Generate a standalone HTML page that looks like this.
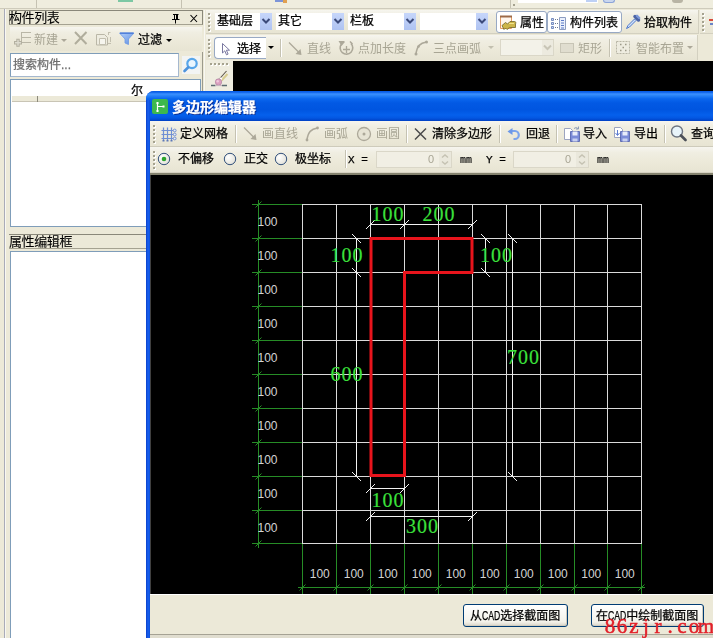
<!DOCTYPE html>
<html lang="zh-CN">
<head>
<meta charset="utf-8">
<title>多边形编辑器</title>
<style>
*{box-sizing:border-box;margin:0;padding:0}
html,body{width:713px;height:638px;overflow:hidden;background:#ECE9D8}
body{position:relative;font-family:"Liberation Sans","Noto Sans CJK SC",sans-serif;font-size:12px;color:#000;line-height:14px}
.a{position:absolute}
.t{position:absolute;white-space:nowrap;height:14px;line-height:14px;will-change:transform;-webkit-text-stroke:.25px}
.dis{color:#A8A594;-webkit-text-stroke:0}
.mono{font-family:"Liberation Mono","Noto Sans CJK SC",monospace;font-size:10px}
.nar{display:inline-block;transform:scaleX(.72);transform-origin:0 50%;margin-right:-7px}
.combo{position:absolute;height:17px;background:#fff;top:13px}
.combo .dd{position:absolute;right:0;top:0;width:12px;height:17px;background:linear-gradient(#C6D6FA,#AFC3F2)}
.sep{position:absolute;width:1px;background:#C5C2B2;box-shadow:1px 0 0 #fff}
.btn{position:absolute;background:#fff;border:1px solid #98A9C4;border-radius:3px}
.tbbg{background:linear-gradient(#F6F5EF 0,#F0EEE2 22%,#ECE9D9 60%,#E7E4D3 100%)}
.xpbtn{position:absolute;border:1px solid #003C74;border-radius:3px;background:linear-gradient(#fff,#F3F2EA 80%,#D9D4C8);box-shadow:inset -1px -1px 0 #D0CCBE}
</style>
</head>
<body>

<div class="a" id="topstrip" style="left:0;top:0;width:713px;height:9px;background:#EFEDDE;border-bottom:1px solid #CECBBB"></div>
<div class="a" style="left:36px;top:0;width:1px;height:8px;background:#C5C2B2"></div>
<div class="a" style="left:118px;top:0;width:15px;height:2px;background:#7CC8A4"></div>
<div class="a" style="left:181px;top:0;width:1px;height:8px;background:#C5C2B2"></div>
<div class="a" style="left:275px;top:0;width:8px;height:2px;background:#7C94D8"></div><div class="a" style="left:283px;top:0;width:4px;height:3px;background:#E0A050"></div>
<div class="a" style="left:510px;top:0;width:1px;height:8px;background:#C5C2B2"></div>
<div class="a" style="left:513px;top:4px;width:2px;height:2px;background:#A5A28F"></div>
<div class="a" style="left:518px;top:0;width:80px;height:3px;background:#fff"></div>
<div class="a" style="left:586px;top:0;width:11px;height:2px;background:#BDD0F5"></div>
<div class="a" style="left:603px;top:0;width:12px;height:3px;background:#C9D6EE;border:1px solid #8CA4D8;border-top:0;border-radius:0 0 3px 3px"></div>
<div class="a" style="left:672px;top:0;width:11px;height:3px;background:#B8B4A4;border-radius:0 0 3px 3px"></div>
<div class="a" id="leftpanel" style="left:0;top:9px;width:205px;height:629px;background:#ECE9D8"></div>
<div class="a" style="left:4px;top:9px;width:1px;height:629px;background:#A9ABB8"></div>
<div class="a" style="left:5px;top:9px;width:1px;height:629px;background:#F8F7F2"></div>
<div class="a" style="left:9px;top:10px;width:194px;height:15px;border:1px solid #8A887A;border-bottom-color:#A5A291;background:#ECE9D8"></div>
<div class="t" style="left:9px;top:11px;font-size:13px;letter-spacing:-0.4px;-webkit-text-stroke:.1px">构件列表</div>
<svg class="a" style="left:168px;top:11px" width="32" height="13" viewBox="0 0 32 13" ><path d="M5 3.5h5.5M6.5 3.5v5M9.5 3.5v5M8.5 3.5v5M4 8.5h7.5M7.5 9v3.5" stroke="#000" fill="none"/><path d="M22.5 4l6.5 7M29 4l-6.5 7" stroke="#000" fill="none" stroke-width="1.1"/></svg>
<div class="a tbbg" style="left:10px;top:27px;width:192px;height:24px"></div>
<svg class="a" style="left:13px;top:30px" width="19" height="18" viewBox="0 0 19 18" ><path d="M9 2.5h9M9 7.5h9M9 12.5h9M8.5 2v12" stroke="#B9B6A6" fill="none"/><path d="M5 8.7v8M1 12.7h8" stroke="#B3B0A0" stroke-width="3.4" fill="none"/><path d="M5 9.7v6M2 12.7h6" stroke="#DEDCD0" stroke-width="1.4" fill="none"/></svg>
<div class="t dis" style="left:34px;top:33px">新建</div>
<div class="a" style="left:61px;top:39px;width:0;height:0;border-left:3px solid transparent;border-right:3px solid transparent;border-top:3px solid #ACA899"></div>
<svg class="a" style="left:73px;top:30px" width="16" height="16" viewBox="0 0 16 16" ><path d="M2 2L13.5 14M13.5 2L2 14" stroke="#B0AD9C" stroke-width="2" fill="none"/></svg>
<svg class="a" style="left:95px;top:31px" width="18" height="15" viewBox="0 0 18 15" ><path d="M1.5 3.5h8l3 3v7.5h-11z" fill="#EEECE0" stroke="#BAB7A7"/><path d="M4.5 7.5h6v6h-6z" fill="#F6F5EE" stroke="#C2BFAF"/><path d="M13.5 1v3M15.5 1.5h-2M15.5 6v5M13 12.5h3" stroke="#C2BFAF" fill="none"/></svg>
<svg class="a" style="left:119px;top:32px" width="16" height="14" viewBox="0 0 16 14" ><defs><linearGradient id="fg" x1="0" y1="0" x2="1" y2="1"><stop offset="0" stop-color="#B4D0FA"/><stop offset="1" stop-color="#5C8CE0"/></linearGradient></defs><path d="M0.5 1h14.5L9.5 7v5.5L6 11V7z" fill="url(#fg)" stroke="#6C98E4" stroke-width=".8"/><path d="M1 1.2h13.5" stroke="#4C7CD8" stroke-width="1.4"/></svg>
<div class="t" style="left:138px;top:33px">过滤</div>
<div class="a" style="left:166px;top:39px;width:0;height:0;border-left:3px solid transparent;border-right:3px solid transparent;border-top:3px solid #000"></div>
<div class="a" style="left:10px;top:53px;width:169px;height:24px;background:#fff;border:1px solid #7F9DB9;border-bottom-color:#A5B8CF;border-right-color:#A5B8CF"></div>
<div class="t" style="left:13px;top:58px;color:#6D6D6D">搜索构件...</div>
<div class="a" style="left:182px;top:56px;width:18px;height:18px;background:#F2F4F4"></div>
<svg class="a" style="left:182px;top:57px" width="17" height="16" viewBox="0 0 17 16" ><circle cx="10" cy="6.5" r="4.7" fill="#EAF6FF" stroke="#58A6EA" stroke-width="2.2"/><path d="M6.3 10.3L2.5 14" stroke="#4D93DC" stroke-width="2.6" stroke-linecap="round"/></svg>
<div class="a" style="left:10px;top:79px;width:191px;height:148px;background:#fff;border:1px solid #7F9DB9"></div>
<div class="a" style="left:12px;top:96px;width:188px;height:6px;background:#ECE9D8;border-bottom:1px solid #C9C5B5"></div>
<div class="a" style="left:37px;top:96px;width:1px;height:6px;background:#8C8A7C"></div>
<div class="t" style="left:131px;top:84px">尔</div>
<div class="a" style="left:9px;top:234px;width:194px;height:15px;border-top:1px solid #8A887A;border-bottom:1px solid #A5A291"></div>
<div class="t" style="left:9px;top:235px;font-size:13px;letter-spacing:-0.4px;-webkit-text-stroke:.1px">属性编辑框</div>
<div class="a" style="left:10px;top:251px;width:191px;height:400px;background:#fff;border:1px solid #7F9DB9"></div>
<div class="a tbbg" id="tb1" style="left:206px;top:10px;width:492px;height:24px;border-bottom:1px solid #D3D0C0"></div>
<div class="a" style="left:208px;top:13px;width:2px;height:2px;background:#A5A28F;box-shadow:1px 1px 0 #fff"></div><div class="a" style="left:208px;top:17px;width:2px;height:2px;background:#A5A28F;box-shadow:1px 1px 0 #fff"></div><div class="a" style="left:208px;top:21px;width:2px;height:2px;background:#A5A28F;box-shadow:1px 1px 0 #fff"></div><div class="a" style="left:208px;top:25px;width:2px;height:2px;background:#A5A28F;box-shadow:1px 1px 0 #fff"></div><div class="a" style="left:208px;top:29px;width:2px;height:2px;background:#A5A28F;box-shadow:1px 1px 0 #fff"></div>
<div class="combo" style="left:215px;width:57px"><span class="t" style="left:2px;top:1px">基础层</span><span class="dd"></span><svg class="a" style="right:0;top:0" width="12" height="17" viewBox="0 0 12 17"><path d="M2.5 6l3.5 3.5l3.5 -3.5" stroke="#3B4A7A" stroke-width="2" fill="none"/></svg></div>
<div class="combo" style="left:276px;width:68px"><span class="t" style="left:2px;top:1px">其它</span><span class="dd"></span><svg class="a" style="right:0;top:0" width="12" height="17" viewBox="0 0 12 17"><path d="M2.5 6l3.5 3.5l3.5 -3.5" stroke="#3B4A7A" stroke-width="2" fill="none"/></svg></div>
<div class="combo" style="left:348px;width:68px"><span class="t" style="left:2px;top:1px">栏板</span><span class="dd"></span><svg class="a" style="right:0;top:0" width="12" height="17" viewBox="0 0 12 17"><path d="M2.5 6l3.5 3.5l3.5 -3.5" stroke="#3B4A7A" stroke-width="2" fill="none"/></svg></div>
<div class="combo" style="left:420px;width:68px"><span class="dd"></span><svg class="a" style="right:0;top:0" width="12" height="17" viewBox="0 0 12 17"><path d="M2.5 6l3.5 3.5l3.5 -3.5" stroke="#3B4A7A" stroke-width="2" fill="none"/></svg></div>
<div class="btn" style="left:496px;top:11px;width:51px;height:22px"></div>
<svg class="a" style="left:499px;top:15px" width="18" height="15" viewBox="0 0 18 15" ><path d="M1.5 1.5h11v12h-11z" fill="#FFF6EC" stroke="#E29A60"/><path d="M1 1.5h12" stroke="#9C6A48" stroke-width="2"/><path d="M3 10.5l3.5 -3l2 1.5l2.5 -2.5h4.5c1.5 0 1.5 1.5 1 2.5v3.5h-6l-2.5 2l-1.5 -1.5l-1.5 1.5z" fill="#CDB64A" stroke="#6E6428" stroke-width=".8"/><path d="M10 8.5h5" stroke="#F2E48C"/></svg>
<div class="t" style="left:520px;top:16px">属性</div>
<div class="btn" style="left:547px;top:11px;width:75px;height:22px"></div>
<svg class="a" style="left:550px;top:16px" width="16" height="14" viewBox="0 0 16 14" ><path d="M9.5 1.5h6v12h-6z" fill="#EAF0FC" stroke="#8C9CC0"/><path d="M11 4.5h3M11 7h3M11 9.5h3M11 12h3" stroke="#4C6CC0" stroke-width=".9"/><path d="M1.5 2.5h2v2h-2zM1.5 6.5h2v2h-2zM1.5 10.5h2v2h-2z" fill="#C8D8F4" stroke="#5C74B0" stroke-width=".8"/><path d="M5 3.5h3M5 7.5h3M5 11.5h3" stroke="#6C7890" stroke-dasharray="1 1"/></svg>
<div class="t" style="left:570px;top:16px">构件列表</div>
<svg class="a" style="left:625px;top:14px" width="16" height="16" viewBox="0 0 16 16" ><path d="M10 2.5l3.5 3.5" stroke="#4C64A4" stroke-width="3.5" stroke-linecap="round"/><path d="M12 1.8l2.2 2.2" stroke="#7C98D8" stroke-width="2.4" stroke-linecap="round"/><path d="M9.5 5L3 11.5l-1.5 3l3 -1.5L11 6.5z" fill="#CFE0FA" stroke="#4E78CC" stroke-width="1"/></svg>
<div class="t" style="left:644px;top:16px">拾取构件</div>
<div class="a" style="left:698px;top:10px;width:1px;height:24px;background:#D3D0C0"></div>
<div class="a tbbg" style="left:700px;top:10px;width:13px;height:24px;border-bottom:1px solid #D3D0C0"></div>
<div class="a" style="left:702px;top:13px;width:2px;height:2px;background:#A5A28F;box-shadow:1px 1px 0 #fff"></div><div class="a" style="left:702px;top:17px;width:2px;height:2px;background:#A5A28F;box-shadow:1px 1px 0 #fff"></div><div class="a" style="left:702px;top:21px;width:2px;height:2px;background:#A5A28F;box-shadow:1px 1px 0 #fff"></div><div class="a" style="left:702px;top:25px;width:2px;height:2px;background:#A5A28F;box-shadow:1px 1px 0 #fff"></div><div class="a" style="left:702px;top:29px;width:2px;height:2px;background:#A5A28F;box-shadow:1px 1px 0 #fff"></div>
<div class="a" style="left:709px;top:19px;width:4px;height:2px;background:#D84A3A"></div><div class="a" style="left:710px;top:23px;width:3px;height:2px;background:#6A84C8"></div>
<div class="a tbbg" id="tb2" style="left:206px;top:35px;width:491px;height:25px"></div>
<div class="a" style="left:697px;top:35px;width:1px;height:25px;background:#D3D0C0"></div>
<div class="a" style="left:208px;top:39px;width:2px;height:2px;background:#A5A28F;box-shadow:1px 1px 0 #fff"></div><div class="a" style="left:208px;top:43px;width:2px;height:2px;background:#A5A28F;box-shadow:1px 1px 0 #fff"></div><div class="a" style="left:208px;top:47px;width:2px;height:2px;background:#A5A28F;box-shadow:1px 1px 0 #fff"></div><div class="a" style="left:208px;top:51px;width:2px;height:2px;background:#A5A28F;box-shadow:1px 1px 0 #fff"></div><div class="a" style="left:208px;top:55px;width:2px;height:2px;background:#A5A28F;box-shadow:1px 1px 0 #fff"></div>
<div class="a" style="left:214px;top:37px;width:52px;height:22px;background:#fff;border:1px solid #98A9C4;border-right:0;border-radius:4px 0 0 4px"></div>
<svg class="a" style="left:220px;top:42px" width="11" height="14" viewBox="0 0 11 14" ><path d="M2.5 1.5v9.5l2.3 -2.2l1.7 4l1.6 -0.7l-1.7 -3.9h3.1z" fill="#fff" stroke="#7A78A0" stroke-width="1"/></svg>
<div class="t" style="left:237px;top:42px">选择</div>
<div class="a" style="left:268px;top:46px;width:0;height:0;border-left:3px solid transparent;border-right:3px solid transparent;border-top:3px solid #000"></div>
<div class="sep" style="left:280px;top:39px;height:18px"></div>
<svg class="a" style="left:287px;top:40px" width="17" height="17" viewBox="0 0 17 17" ><path d="M2 2.5L13.5 14" stroke="#ACA899" stroke-width="1.3" fill="none"/><path d="M14.5 15l-1 -6l-5 5z" fill="#ACA899"/></svg>
<div class="t dis" style="left:307px;top:42px">直线</div>
<svg class="a" style="left:337px;top:39px" width="19" height="18" viewBox="0 0 19 18" ><path d="M4.5 5A6.3 6.3 0 1 0 14 4.5" stroke="#ACA899" stroke-width="1.6" fill="none"/><path d="M1.5 2h6v1.5l-3 3.5z" fill="#ACA899"/><path d="M9.5 7v7M6 10.5h7" stroke="#ACA899" stroke-width="1.3"/><path d="M13 2.5l2.5 2.5" stroke="#ACA899" stroke-width="1.5"/></svg>
<div class="t dis" style="left:358px;top:42px">点加长度</div>
<svg class="a" style="left:413px;top:39px" width="16" height="17" viewBox="0 0 16 17" ><path d="M3 15C4 7 7 4 13.5 3" stroke="#ACA899" stroke-width="1.5" fill="none"/><circle cx="3" cy="15" r="1.5" fill="#ACA899"/><circle cx="13.5" cy="3" r="1.5" fill="#ACA899"/><circle cx="5.5" cy="7.5" r="1.3" fill="#ACA899"/></svg>
<div class="t dis" style="left:433px;top:42px">三点画弧</div>
<div class="a" style="left:488px;top:46px;width:0;height:0;border-left:3px solid transparent;border-right:3px solid transparent;border-top:3px solid #C2BFAF"></div>
<div class="a" style="left:500px;top:39px;width:54px;height:17px;border:1px solid #DAD7C8;background:#F3F2E9"></div>
<svg class="a" style="left:542px;top:40px" width="11" height="15" viewBox="0 0 11 15"><rect width="11" height="15" fill="#ECEADF"/><path d="M2.0 5.5l3.5 3.5l3.5 -3.5" stroke="#C8C5B6" stroke-width="2" fill="none"/></svg>
<div class="a" style="left:560px;top:43px;width:14px;height:10px;border:1px solid #C8C5B6;background:#E0DDCF"></div>
<div class="t dis" style="left:578px;top:42px">矩形</div>
<div class="sep" style="left:609px;top:39px;height:18px"></div>
<svg class="a" style="left:616px;top:41px" width="15" height="14" viewBox="0 0 15 14" ><rect x=".5" y=".5" width="13" height="12" fill="#EEECE0" stroke="#B9B6A6" stroke-dasharray="2 1"/><path d="M4 3.5h1.5M9 3.5h1.5M4 9.5h1.5M9 9.5h1.5M6.5 6.5h1.5" stroke="#9C9988" stroke-width="1.5"/></svg>
<div class="t dis" style="left:636px;top:42px">智能布置</div>
<div class="a" style="left:687px;top:46px;width:0;height:0;border-left:3px solid transparent;border-right:3px solid transparent;border-top:3px solid #ACA899"></div>
<div class="a" style="left:206px;top:60px;width:27px;height:40px;background:#EFEDE0"></div>
<div class="a" style="left:202px;top:52px;width:1px;height:40px;background:#9C9A8C"></div>
<div class="a" style="left:204px;top:10px;width:1px;height:82px;background:#F8F7F2"></div>
<div class="a" style="left:210px;top:63px;width:2px;height:2px;background:#A5A28F;box-shadow:1px 1px 0 #fff"></div><div class="a" style="left:214px;top:63px;width:2px;height:2px;background:#A5A28F;box-shadow:1px 1px 0 #fff"></div><div class="a" style="left:218px;top:63px;width:2px;height:2px;background:#A5A28F;box-shadow:1px 1px 0 #fff"></div><div class="a" style="left:222px;top:63px;width:2px;height:2px;background:#A5A28F;box-shadow:1px 1px 0 #fff"></div><div class="a" style="left:226px;top:63px;width:2px;height:2px;background:#A5A28F;box-shadow:1px 1px 0 #fff"></div>
<svg class="a" style="left:208px;top:68px" width="22" height="20" viewBox="0 0 22 20" ><path d="M18.5 3L10 12.5" stroke="#5C5448" stroke-width="1.1"/><path d="M19.5 6L13.5 12.5" stroke="#D8CC90" stroke-width="2"/><path d="M13.5 10l-2 2.2" stroke="#fff" stroke-width="2.4"/><circle cx="10.5" cy="14" r="3.2" fill="#DCA0C0" stroke="#A87C98" stroke-width=".6"/><circle cx="9.7" cy="13.2" r="1.2" fill="#F0C8DC"/><path d="M3 17.5h4.5M14 17.5h5" stroke="#5C6C70" stroke-width="1.6"/><path d="M7.5 17.5h6.5" stroke="#C8B4C0" stroke-width="1.2"/></svg>
<div class="a" id="maincanvas" style="left:233px;top:61px;width:480px;height:40px;background:#000"></div>
<div class="a" id="dlg" style="left:146px;top:91px;width:600px;height:600px;background:#0A4FDC;border-radius:8px 0 0 0"></div>
<div class="a" id="dlgtitle" style="left:146px;top:91px;width:567px;height:30px;border-radius:8px 0 0 0;background:linear-gradient(#0558E4 0,#0C62EA 4%,#3C90FF 10%,#2682F8 16%,#0A66EE 26%,#0259E4 40%,#0055E0 62%,#0560EC 80%,#0357E2 90%,#0040C4 100%)"></div>
<div class="a" style="left:146px;top:100px;width:4px;height:540px;background:linear-gradient(90deg,#0A3FC8,#1860F0 50%,#0A4FDC)"></div>
<svg class="a" style="left:152px;top:99px" width="16" height="15" viewBox="0 0 16 15" ><rect width="16" height="15" rx="2" fill="#3DB84E"/><path d="M5.5 4v8M5.5 7.5h6" stroke="#fff" stroke-width="1.2"/><path d="M4.5 3h2v2h-2zM4.5 11h2v2h-2zM10.5 6.5h2v2h-2z" fill="#fff"/></svg>
<div class="t" style="left:172px;top:100px;font-size:14px;font-weight:bold;color:#fff;text-shadow:1px 1px 0 #0A2A8C">多边形编辑器</div>
<div class="a" id="dlgbody" style="left:150px;top:121px;width:563px;height:517px;background:#ECE9D8"></div>
<div class="a tbbg" style="left:150px;top:121px;width:563px;height:26px;border-bottom:1px solid #CECBBB"></div>
<div class="a" style="left:153px;top:125px;width:2px;height:2px;background:#A5A28F;box-shadow:1px 1px 0 #fff"></div><div class="a" style="left:153px;top:129px;width:2px;height:2px;background:#A5A28F;box-shadow:1px 1px 0 #fff"></div><div class="a" style="left:153px;top:133px;width:2px;height:2px;background:#A5A28F;box-shadow:1px 1px 0 #fff"></div><div class="a" style="left:153px;top:137px;width:2px;height:2px;background:#A5A28F;box-shadow:1px 1px 0 #fff"></div><div class="a" style="left:153px;top:141px;width:2px;height:2px;background:#A5A28F;box-shadow:1px 1px 0 #fff"></div>
<svg class="a" style="left:160px;top:126px" width="17" height="16" viewBox="0 0 17 16" ><path d="M3.5 1.5v12.5M7.5 1.5v12.5M11.5 1.5v12.5M1.5 4.5h12M1.5 8.5h12M1.5 12.5h12" stroke="#7090D4" stroke-width="1.2" fill="none"/><path d="M2.5 14h2v1.5h-2zM6.5 14h2v1.5h-2zM10.5 14h2v1.5h-2z" fill="#5C78B8"/><circle cx="14.7" cy="4.5" r="1.4" fill="#E8EEFA" stroke="#6C88C8" stroke-width=".9"/><circle cx="14.7" cy="8.5" r="1.4" fill="#E8EEFA" stroke="#6C88C8" stroke-width=".9"/><circle cx="14.7" cy="12.5" r="1.4" fill="#E8EEFA" stroke="#6C88C8" stroke-width=".9"/></svg>
<div class="t" style="left:180px;top:127px">定义网格</div>
<div class="sep" style="left:235px;top:125px;height:18px"></div>
<svg class="a" style="left:242px;top:125px" width="17" height="17" viewBox="0 0 17 17" ><path d="M2 2.5L13.5 14" stroke="#ACA899" stroke-width="1.3" fill="none"/><path d="M14.5 15l-1 -6l-5 5z" fill="#ACA899"/></svg>
<div class="t dis" style="left:262px;top:127px">画直线</div>
<svg class="a" style="left:304px;top:125px" width="16" height="17" viewBox="0 0 16 17" ><path d="M3 15C4 7 7 4 13.5 3" stroke="#ACA899" stroke-width="1.5" fill="none"/><circle cx="3" cy="15" r="1.4" fill="#ACA899"/><circle cx="13.5" cy="3" r="1.4" fill="#ACA899"/></svg>
<div class="t dis" style="left:324px;top:127px">画弧</div>
<svg class="a" style="left:356px;top:126px" width="16" height="16" viewBox="0 0 16 16" ><circle cx="8" cy="8" r="6.5" fill="#E6E3D4" stroke="#ACA899" stroke-width="1.3"/><circle cx="8" cy="8" r="1.5" fill="#ACA899"/></svg>
<div class="t dis" style="left:376px;top:127px">画圆</div>
<div class="sep" style="left:406px;top:125px;height:18px"></div>
<svg class="a" style="left:413px;top:126px" width="16" height="16" viewBox="0 0 16 16" ><path d="M2 2.5L13 13.5M13 2.5L2 13.5" stroke="#4A4A4A" stroke-width="1.5" fill="none"/></svg>
<div class="t" style="left:432px;top:127px">清除多边形</div>
<div class="sep" style="left:499px;top:125px;height:18px"></div>
<svg class="a" style="left:506px;top:126px" width="16" height="16" viewBox="0 0 16 16" ><path d="M5 5h4a3.8 4 0 0 1 0 8h-1.5" stroke="#7CA4EC" stroke-width="2.2" fill="none"/><path d="M1.5 5.5l5 -3.5v7z" fill="#6C98E8"/></svg>
<div class="t" style="left:526px;top:127px">回退</div>
<div class="sep" style="left:556px;top:125px;height:18px"></div>
<svg class="a" style="left:563px;top:125px" width="18" height="17" viewBox="0 0 18 17" ><path d="M1.5 3.5h6l2 2v9h-8z" fill="#fff" stroke="#9CA4C0"/><path d="M7.5 6.5h9v10h-9z" fill="#7C8CD8" stroke="#4C5CA8" stroke-width=".8"/><path d="M9.5 6.5h5v4h-5z" fill="#E8ECFA"/><path d="M9.5 13.5h5v3h-5z" fill="#C8D0F0"/><path d="M11 3.5a3 3 0 0 1 4 0" stroke="#8C9CB8" fill="none"/><path d="M15.5 1.5v2.5h-2.5" stroke="#8C9CB8" fill="none"/></svg>
<div class="t" style="left:583px;top:127px">导入</div>
<svg class="a" style="left:613px;top:125px" width="18" height="17" viewBox="0 0 18 17" ><path d="M1.5 2.5h6l2 2v8h-8z" fill="#fff" stroke="#9CA4C0"/><path d="M4.5 5v5M2.5 8l2 2.5l2 -2.5" stroke="#5C7CD0" fill="none"/><path d="M7.5 6.5h9v10h-9z" fill="#7C8CD8" stroke="#4C5CA8" stroke-width=".8"/><path d="M9.5 6.5h5v4h-5z" fill="#E8ECFA"/><path d="M9.5 13.5h5v3h-5z" fill="#C8D0F0"/></svg>
<div class="t" style="left:634px;top:127px">导出</div>
<div class="sep" style="left:664px;top:125px;height:18px"></div>
<svg class="a" style="left:670px;top:125px" width="17" height="17" viewBox="0 0 17 17" ><circle cx="7" cy="6.5" r="5.5" fill="#E8F4FA" stroke="#6C7480" stroke-width="1.4"/><path d="M11 10.5l4.5 4.5" stroke="#4C5058" stroke-width="2.6" stroke-linecap="round"/></svg>
<div class="t" style="left:691px;top:127px">查询</div>
<div class="a tbbg" style="left:150px;top:147px;width:563px;height:25px"></div>
<div class="a" style="left:153px;top:151px;width:2px;height:2px;background:#A5A28F;box-shadow:1px 1px 0 #fff"></div><div class="a" style="left:153px;top:155px;width:2px;height:2px;background:#A5A28F;box-shadow:1px 1px 0 #fff"></div><div class="a" style="left:153px;top:159px;width:2px;height:2px;background:#A5A28F;box-shadow:1px 1px 0 #fff"></div><div class="a" style="left:153px;top:163px;width:2px;height:2px;background:#A5A28F;box-shadow:1px 1px 0 #fff"></div><div class="a" style="left:153px;top:167px;width:2px;height:2px;background:#A5A28F;box-shadow:1px 1px 0 #fff"></div>
<svg class="a" style="left:157px;top:152px" width="14" height="14" viewBox="0 0 14 14"><defs><radialGradient id="rg164" cx=".35" cy=".35" r=".8"><stop offset="0" stop-color="#fff"/><stop offset="1" stop-color="#DDDCD2"/></radialGradient></defs><circle cx="7" cy="7" r="5.7" fill="url(#rg164)" stroke="#34527C" stroke-width="1"/><circle cx="7" cy="7" r="2.3" fill="#2CA52C"/></svg>
<div class="t" style="left:178px;top:152px">不偏移</div>
<svg class="a" style="left:223px;top:152px" width="14" height="14" viewBox="0 0 14 14"><defs><radialGradient id="rg230" cx=".35" cy=".35" r=".8"><stop offset="0" stop-color="#fff"/><stop offset="1" stop-color="#DDDCD2"/></radialGradient></defs><circle cx="7" cy="7" r="5.7" fill="url(#rg230)" stroke="#34527C" stroke-width="1"/></svg>
<div class="t" style="left:244px;top:152px">正交</div>
<svg class="a" style="left:274px;top:152px" width="14" height="14" viewBox="0 0 14 14"><defs><radialGradient id="rg281" cx=".35" cy=".35" r=".8"><stop offset="0" stop-color="#fff"/><stop offset="1" stop-color="#DDDCD2"/></radialGradient></defs><circle cx="7" cy="7" r="5.7" fill="url(#rg281)" stroke="#34527C" stroke-width="1"/></svg>
<div class="t" style="left:295px;top:152px">极坐标</div>
<div class="sep" style="left:345px;top:150px;height:18px"></div>
<div class="t mono" style="left:348px;top:153px;font-size:11px">X =</div>
<div class="a" style="left:376px;top:151px;width:76px;height:17px;border:1px solid #DAD7C8;background:#F1EFE4"></div><div class="t dis" style="left:428px;top:152px;font-size:11px">0</div><svg class="a" style="left:439px;top:152px" width="12" height="15" viewBox="0 0 12 15"><rect width="12" height="15" fill="#EAE8DC"/><path d="M3 5.5l3 -2.5l3 2.5M3 9.5l3 2.5l3 -2.5" stroke="#C5C2B2" stroke-width="1.4" fill="none"/></svg>
<div class="t mono" style="left:460px;top:154px;-webkit-text-stroke:.15px">mm</div>
<div class="t mono" style="left:486px;top:153px;font-size:11px">Y =</div>
<div class="a" style="left:513px;top:151px;width:76px;height:17px;border:1px solid #DAD7C8;background:#F1EFE4"></div><div class="t dis" style="left:565px;top:152px;font-size:11px">0</div><svg class="a" style="left:576px;top:152px" width="12" height="15" viewBox="0 0 12 15"><rect width="12" height="15" fill="#EAE8DC"/><path d="M3 5.5l3 -2.5l3 2.5M3 9.5l3 2.5l3 -2.5" stroke="#C5C2B2" stroke-width="1.4" fill="none"/></svg>
<div class="t mono" style="left:597px;top:154px;-webkit-text-stroke:.15px">mm</div>
<div class="a" style="left:150px;top:172px;width:563px;height:1px;background:#D6D2C2"></div>
<div class="a" style="left:150px;top:173px;width:563px;height:2px;background:#84826E"></div>
<div class="a" style="left:150px;top:175px;width:1px;height:419px;background:#404040"></div>
<svg class="a" id="cv" style="left:151px;top:175px" width="562" height="419" viewBox="151 175 562 419" font-family="'Liberation Sans',sans-serif">
<rect x="151" y="175" width="562" height="419" fill="#000"/>
<path d="M258.5 200V548M252 204.5H302M252 238.5H302M252 272.5H302M252 306.5H302M252 340.5H302M252 374.5H302M252 408.5H302M252 442.5H302M252 476.5H302M252 510.5H302M252 543.5H302M298 587.5H645M302.5 544V594M336.5 544V594M370.5 544V594M404.5 544V594M438.5 544V594M472.5 544V594M506.5 544V594M540.5 544V594M574.5 544V594M607.5 544V594M641.5 544V594" stroke="#268C26" fill="none" shape-rendering="crispEdges"/>
<path d="M255.5 207.5l6 -6M255.5 241.5l6 -6M255.5 275.5l6 -6M255.5 309.5l6 -6M255.5 343.5l6 -6M255.5 377.5l6 -6M255.5 411.5l6 -6M255.5 445.5l6 -6M255.5 479.5l6 -6M255.5 513.5l6 -6M255.5 546.5l6 -6M299.5 590.5l6 -6M333.5 590.5l6 -6M367.5 590.5l6 -6M401.5 590.5l6 -6M435.5 590.5l6 -6M469.5 590.5l6 -6M503.5 590.5l6 -6M537.5 590.5l6 -6M571.5 590.5l6 -6M604.5 590.5l6 -6M638.5 590.5l6 -6" stroke="#268C26" fill="none"/>
<path d="M302.5 204V544M336.5 204V544M370.5 204V544M404.5 204V544M438.5 204V544M472.5 204V544M506.5 204V544M540.5 204V544M574.5 204V544M607.5 204V544M641.5 204V544M302 204.5H642M302 238.5H642M302 272.5H642M302 306.5H642M302 340.5H642M302 374.5H642M302 408.5H642M302 442.5H642M302 476.5H642M302 510.5H642M302 543.5H642" stroke="#DADADA" fill="none" shape-rendering="crispEdges"/>
<path d="M370 224.5H473M356.5 238V477M485.5 238V273M512.5 238V477M370 488.5H405M370 516.5H473" stroke="#F2F2F2" fill="none" shape-rendering="crispEdges"/>
<path d="M366.0 229.0l9 -9M400.0 229.0l9 -9M468.0 229.0l9 -9M352.0 234.0l9 9M352.0 268.0l9 9M352.0 472.0l9 9M481.0 234.0l9 9M481.0 268.0l9 9M508.0 234.0l9 9M508.0 472.0l9 9M366.0 493.0l9 -9M400.0 493.0l9 -9M366.0 521.0l9 -9M468.0 521.0l9 -9" stroke="#F2F2F2" fill="none"/>
<path d="M371 238.5H472V272.5H404.5V475.5H371Z" stroke="#E8141C" stroke-width="3" fill="none"/>
<g font-family="'Liberation Serif',serif" font-size="20" fill="#3CE23C" text-anchor="middle" letter-spacing="1" stroke="#3CE23C" stroke-width=".15">
<text x="387.9" y="221">100</text>
<text x="438.9" y="221">200</text>
<text x="346.9" y="262">100</text>
<text x="496.4" y="262">100</text>
<text x="523.4" y="364">700</text>
<text x="346.9" y="380.5">600</text>
<text x="387.9" y="506.5">100</text>
<text x="422.4" y="533">300</text>
</g>
<g font-size="12" fill="#D4D4D4" letter-spacing="-0.1">
<text x="257.6" y="226">100</text>
<text x="257.6" y="260">100</text>
<text x="257.6" y="294">100</text>
<text x="257.6" y="328">100</text>
<text x="257.6" y="362">100</text>
<text x="257.6" y="396">100</text>
<text x="257.6" y="430">100</text>
<text x="257.6" y="464">100</text>
<text x="257.6" y="498">100</text>
<text x="257.6" y="532">100</text>
<text x="319.7" y="578" text-anchor="middle">100</text>
<text x="353.7" y="578" text-anchor="middle">100</text>
<text x="387.7" y="578" text-anchor="middle">100</text>
<text x="421.7" y="578" text-anchor="middle">100</text>
<text x="455.7" y="578" text-anchor="middle">100</text>
<text x="489.7" y="578" text-anchor="middle">100</text>
<text x="523.7" y="578" text-anchor="middle">100</text>
<text x="557.7" y="578" text-anchor="middle">100</text>
<text x="591.2" y="578" text-anchor="middle">100</text>
<text x="624.7" y="578" text-anchor="middle">100</text>
</g></svg>
<div class="a" style="left:150px;top:594px;width:563px;height:1px;background:#fff"></div>
<div class="xpbtn" style="left:463px;top:604px;width:105px;height:23px"></div>
<div class="t" style="left:470px;top:609px">从<span class="nar">CAD</span>选择截面图</div>
<div class="xpbtn" style="left:591px;top:604px;width:113px;height:23px"></div>
<div class="t" style="left:596px;top:609px">在<span class="nar">CAD</span>中绘制截面图</div>
<div class="a" style="left:150px;top:634px;width:563px;height:4px;background:#E0DDCF;border-top:1px solid #A5A294"></div>
<svg class="a" style="left:596px;top:610px" width="117" height="28" viewBox="596 610 117 28"><text x="610 622 634 646 658 670 682 694 706" y="632.5" text-anchor="middle" font-family="'Liberation Serif',serif" font-size="21" fill="#E2202A" stroke="#E2202A" stroke-width=".5">86zjr.com</text></svg>
</body>
</html>
